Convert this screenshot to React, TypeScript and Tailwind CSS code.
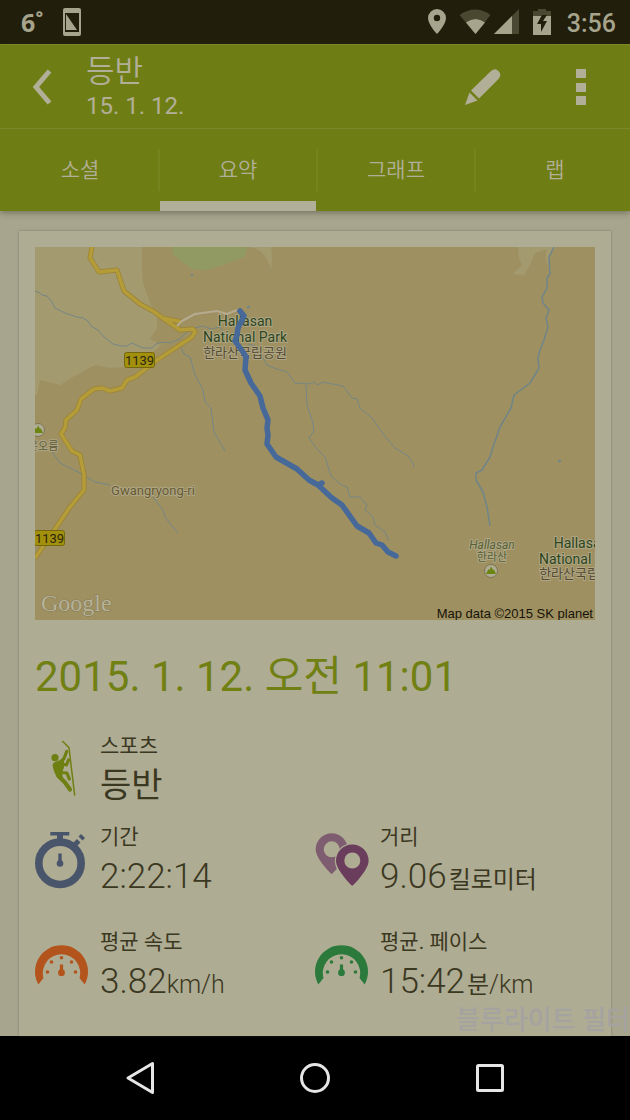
import type { ReactNode } from "react";

const sans = "font-['Roboto','Noto_Sans_CJK_KR',sans-serif]";

function StatusBar() {
  return (
    <div className="flex h-11 shrink-0 items-center justify-between bg-[#211e0b] pr-3.5 pl-5 text-[#a7a48d]">
      <div className="flex items-center gap-5">
        <span className="pl-px font-['Noto_Sans',sans-serif] text-[25px] leading-none font-bold">6˚</span>
        <svg width="18" height="28" viewBox="0 0 18 28" aria-hidden="true">
          <rect width="18" height="28" rx="2" fill="currentColor" />
          <path d="M2 5h14v19H2z" fill="#211e0b" />
          <path d="M3 6L14 22H3z" fill="currentColor" />
        </svg>
      </div>
      <div className="flex items-center">
        <svg width="91" height="26" viewBox="0 0 91 26" aria-hidden="true">
          <path
            d="M9 0a9 9 0 0 0-9 9c0 6.500 9 16 9 16s9-9.500 9-16a9 9 0 0 0-9-9zm0 12.200a3.200 3.200 0 1 1 0-6.400 3.200 3.200 0 0 1 0 6.400z"
            fill="currentColor"
          />
          <path d="M31.500 6q16-11 31 0L47.500 25z" fill="#4b4831" />
          <path d="M38 13.500q9.500-7 19 0L47.500 25z" fill="currentColor" />
          <path d="M66 25L91 0v25z" fill="#4b4831" />
          <path d="M66 25L84 7v18z" fill="currentColor" />
        </svg>
        <svg className="ml-3.5" width="18" height="26" viewBox="0 0 18 26" aria-hidden="true">
          <path d="M5 0h8v2h5v5H0V2h5z" fill="#4b4831" />
          <path d="M0 7h18v19H0z" fill="currentColor" />
          <path d="M9 6L4 15h4v8l6-11h-4l4-6z" fill="#211e0b" />
        </svg>
        <span className="ml-4 pt-0.5 text-[25px] leading-none font-medium">3:56</span>
      </div>
    </div>
  );
}

function TitleBar() {
  return (
    <header className="flex h-[85px] items-center border-t border-b border-t-[#7a8825] border-b-[#7a882a] pr-6 pl-8">
      <button type="button" aria-label="뒤로" className="w-[54px]">
        <svg width="20" height="36" viewBox="0 0 20 36" fill="none" aria-hidden="true">
          <path d="M17.500 2L4 18l13.500 16" stroke="#b2af98" strokeWidth="5" />
        </svg>
      </button>
      <div className="flex-1">
        <h1 className="pt-0.5 text-[31px] leading-9 font-[350]">등반</h1>
        <p className="text-2xl leading-8">15. 1. 12.</p>
      </div>
      <button type="button" aria-label="편집">
        <svg width="36" height="36" viewBox="0 0 36 36" fill="#b2af98" aria-hidden="true">
          <path d="M6 21.500L26 2q4-3.500 7.500 0t0 8L14 29.500z" />
          <path d="M4.500 23.500L12.500 31.500 0 36z" />
        </svg>
      </button>
      <button type="button" aria-label="더보기" className="ml-[67px] w-[38px]">
        <svg className="ml-2" width="10" height="36" viewBox="0 0 10 36" fill="#b2af98" aria-hidden="true">
          <path d="M0 0h10v9H0zM0 14h10v9H0zM0 27h10v9H0z" />
        </svg>
      </button>
    </header>
  );
}

function Tabs() {
  const tabs = ["소셜", "요약", "그래프", "랩"];
  return (
    <nav className="overflow-hidden">
      <div className="-mr-1 grid h-[82px] grid-cols-4 pl-0.5" role="tablist">
        {tabs.map((tab, i) => (
          <button
            key={tab}
            type="button"
            role="tab"
            aria-selected={i === 1}
            className="flex flex-col text-[21px] font-[350]"
          >
            <span
              className={
                i < 3
                  ? "mt-5 flex h-[42px] w-full items-center justify-center border-r-2 border-[#76841f] pt-0.5"
                  : "mt-5 flex h-[42px] w-full items-center justify-center pt-0.5"
              }
            >
              {tab}
            </span>
            {i === 1 && <span className="mt-auto h-2.5 w-full border-r-2 border-[#6f7e14] bg-[#b2af98]" />}
          </button>
        ))}
      </div>
    </nav>
  );
}

function Peak({ x, y }: { x: number; y: number }) {
  return (
    <g transform={`translate(${x} ${y})`}>
      <circle r="6.500" fill="#aeac92" stroke="#7d7553" />
      <path d="M-5 3l2.500-5 1 1L0-4.500 2-1l1-.5L5 3z" fill="#6c8410" />
    </g>
  );
}

function RoadSign({ x, y }: { x: number; y: number }) {
  return (
    <g transform={`translate(${x} ${y})`}>
      <rect x="0.500" y="0.500" width="30" height="15" rx="2" fill="#a28f0c" stroke="#75670d" />
      <text x="15.500" y="13" textAnchor="middle" fontSize="13" fill="#2b2610">
        1139
      </text>
    </g>
  );
}

function RouteMap() {
  const halo = "[paint-order:stroke] [stroke:#aea686] [stroke-width:2px] [stroke-linejoin:round]";
  return (
    <svg
      className={`block h-auto w-full ${sans}`}
      viewBox="0 0 560 373"
      role="img"
      aria-label="Hallasan National Park"
    >
      <rect width="560" height="373" fill="#9f9061" />
      <path
        d="M0 0H107V20L108 36 116 58 122 68V81L115 92 126 98 110 113 92 120 75 121 60 118 38 130 25 138 5 133 2 148H0z"
        fill="#a39a70"
      />
      <path d="M137 0l1 8 19 14 15 1 13-4 13-5 12-4 2-10z" fill="#919a63" />
      <path d="M214 0q17 2 22 23 2-10 0-23z" fill="#a39a70" />
      <path d="M483 0l1 11 3 7-9 9 11 1 6-10 5-12 12-4q-3 8 1 18 0-14 9-20z" fill="#a39a70" />

      <g fill="none" stroke="#748784" strokeWidth="1" strokeLinejoin="round">
        <path d="M0 44l5 2 2 2 5 1 5 6 3 6 10 5 12 4 6 1 5 3 3 5 7 4 6 7 9 7 8 2 6 0 5-3 11 5 9 0 4-4 6-2 8 1 10-4 7-7 8-4 8-2 8 3 9-2 3 5M213 97l7 2 5 7 7 12 10 4 10 3 8 11 15 1 3-2 5 3 4-3 21 4 9 12 5 1 3 9 12 10 12 17 11 13 13 8 5 7 1 4" />
        <path d="M145 98l4 9 6 3 5 18 8 15 2 12 6 6 3 24 11 19" />
        <path d="M271 138l1 20 6 18 1 8-5 7 8 11 8 8 6 19 9 8 7 3 3 10 10 0 7 8-2 5 8 7 2 8 10 7 4 9" />
        <path d="M17 205l8 11 20 10 15 9 15 3M118 250l10 13 2 7 7 9 6 7" />
        <path
          d="M519 0l-5 10 1 17-3 4 0 10-5 9 1 6 6 7-3 8 2 9-4 13-5 13-1 6 1 9-9 15-16 12-3 13-11 19-8 23-2 7-8 13-6 3 0 7 7 12 4 15 3 19"
          stroke="#6f8588"
          strokeWidth="1.500"
        />
        <path d="M156 28h2M212 60h3M523 214h3" strokeWidth="2.500" />
      </g>

      <path
        d="M57 0L55 11 64 25 82 23 89 44 105 57 118 64 129 72 145 83 158 82 160 85 157 90 122 113 100 130 92 133 87 141 75 144 67 141 59 142 46 152 42 163 31 173 30 181 26 187 37 204 45 208 49 228V243L35 260 18 285 0 311M127 71L147 75"
        fill="none"
        stroke="#9b8234"
        strokeWidth="5"
        strokeLinejoin="round"
      />
      <path
        d="M57 0L55 11 64 25 82 23 89 44 105 57 118 64 129 72 145 83 158 82 160 85 157 90 122 113 100 130 92 133 87 141 75 144 67 141 59 142 46 152 42 163 31 173 30 181 26 187 37 204 45 208 49 228V243L35 260 18 285 0 311M127 71L147 75"
        fill="none"
        stroke="#b49c38"
        strokeWidth="3.500"
        strokeLinejoin="round"
      />
      <path
        d="M142 79l5-5 13-7 22-3 10 3 10-4"
        fill="none"
        stroke="#b5ab90"
        strokeWidth="2"
        strokeLinejoin="round"
      />

      <RoadSign x={89} y={105} />
      <RoadSign x={-1} y={283} />
      <Peak x={3} y={183} />
      <Peak x={456} y={324} />

      <g className={halo} textAnchor="middle">
        <g fontSize="14" fill="#2c451b">
          <text x="210" y="79">Hallasan</text>
          <text x="210" y="95">National Park</text>
          <text x="546" y="301">Hallasan</text>
          <text x="546" y="317">National Park</text>
        </g>
        <g fontSize="13" fill="#554b31">
          <text x="210" y="110">한라산국립공원</text>
          <text x="546" y="331">한라산국립공원</text>
        </g>
        <text x="3" y="203" fontSize="11" fill="#5d5a36">
          검은오름
        </text>
        <text x="118" y="248" fontSize="13" fill="#665b32">
          Gwangryong-ri
        </text>
        <text x="457" y="302" fontSize="12" fontStyle="italic" fill="#566032">
          Hallasan
        </text>
        <text x="457" y="314" fontSize="11" fill="#566032">
          한라산
        </text>
      </g>

      <path
        d="M205 64L209 69 203 81 202 88 200 94 208 105 211 110 210 123 216 136 225 149 228 161 233 173 232 181 233 188 232 197 241 210 262 222 274 233 283 238 297 251 307 258 322 279 334 286 341 296 347 298 353 305 361 309M283 238L287 236"
        fill="none"
        stroke="#46699a"
        strokeWidth="5.500"
        strokeLinecap="round"
        strokeLinejoin="round"
      />
      <text
        x="6"
        y="364"
        fontSize="24"
        fill="#b5b298"
        className="font-['Liberation_Serif',serif] [paint-order:stroke] [stroke:#867b57] [stroke-width:1px]"
      >
        Google
      </text>
      <text
        x="558"
        y="371"
        textAnchor="end"
        fontSize="13"
        fill="#15130a"
        className="font-['Liberation_Sans',sans-serif]"
      >
        Map data ©2015 SK planet
      </text>
    </svg>
  );
}

function ClimberIcon() {
  return (
    <svg className="ml-[15px]" width="27" height="57" viewBox="0 0 27 57" fill="none" stroke="#6f8013" aria-hidden="true">
      <path d="M12.300 1L19 7.700l5.700 48" strokeWidth="1.500" />
      <circle cx="5" cy="17.700" r="3.600" fill="#6f8013" stroke="none" />
      <path d="M2.500 25Q3 22 9 20.500L14 20.500l0 7-2 5 1 6L9.500 39.500Q4 35 2.500 25z" fill="#6f8013" stroke="none" />
      <g strokeWidth="3.200" strokeLinecap="round" strokeLinejoin="round">
        <path d="M10 22.500l4-4 2.700-7M12 24l4.500 1 2-5M10 32.500l7 .5 2.300 6" />
        <path d="M8 35.500l7 7 5 7" strokeWidth="4.200" />
      </g>
    </svg>
  );
}

function StopwatchIcon() {
  return (
    <svg width="53" height="58" viewBox="0 0 53 58" fill="#49556a" aria-hidden="true">
      <circle cx="25" cy="32.300" r="21.200" fill="none" stroke="#49556a" strokeWidth="7.600" />
      <path d="M15.300 1h19v3.500H28V9h-6V4.500h-6.700z" />
      <path d="M38 12l4-4 3.500 3.500-4 4zM43.500 5.500L46 3l4 4L47.500 9.500z" />
      <circle cx="25" cy="32.500" r="3.300" />
      <path d="M23.300 22.500h3.400V32h-3.400z" />
    </svg>
  );
}

function PinsIcon() {
  return (
    <svg width="55" height="54" viewBox="0 0 55 54" aria-hidden="true">
      <path
        d="M16.700.3a16 16 0 0 0-16 16c0 10 16 25 16 25s16-15 16-25a16 16 0 0 0-16-16zm0 24a8 8 0 1 1 0-16 8 8 0 0 1 0 16z"
        fill="#7f5d70"
      />
      <circle cx="37.300" cy="27.800" r="17.500" fill="#afac94" />
      <path
        d="M37.300 11.500A16.200 16.200 0 0 0 21 27.700C21 37.500 37.300 53 37.300 53s16.300-15.500 16.300-25.300a16.200 16.200 0 0 0-16.300-16.200zm0 24a8 8 0 1 1 0-16 8 8 0 0 1 0 16z"
        fill="#6b3d5c"
      />
    </svg>
  );
}

function GaugeIcon({ color }: { color: string }) {
  return (
    <svg width="53" height="40" viewBox="0 0 53 40" fill={color} aria-hidden="true">
      <path d="M3.300 39.500A26.500 26.500 0 1 1 49.700 39.500L44.500 33A18.700 18.700 0 1 0 8.500 33z" />
      <circle cx="12.500" cy="27" r="1.800" />
      <circle cx="16.500" cy="17" r="1.800" />
      <circle cx="26.500" cy="12.700" r="1.800" />
      <circle cx="36.500" cy="17" r="1.800" />
      <circle cx="40.500" cy="27" r="1.800" />
      <circle cx="26.500" cy="27.700" r="3.400" />
      <path d="M24.900 19.500h3.200V28h-3.200z" />
    </svg>
  );
}

function Stat({ icon, label, children }: { icon: ReactNode; label: string; children: ReactNode }) {
  return (
    <div className="flex items-center">
      <div className="w-[65px] shrink-0">{icon}</div>
      <dl>
        <dt className="text-[21px] leading-8">{label}</dt>
        <dd className="h-[45px] text-[35px] leading-[48px] font-light whitespace-nowrap">{children}</dd>
      </dl>
    </div>
  );
}

function NavigationBar() {
  return (
    <nav className="grid h-[84px] shrink-0 grid-cols-3 bg-black px-[52px]">
      <button type="button" aria-label="뒤로" className="flex items-center justify-center">
        <svg width="30" height="34" viewBox="0 0 30 34" fill="none" stroke="#e6e6e6" strokeWidth="3" aria-hidden="true">
          <path d="M27.500 2.500v29L3 17z" strokeLinejoin="round" />
        </svg>
      </button>
      <button type="button" aria-label="홈" className="flex items-center justify-center">
        <svg width="32" height="32" viewBox="0 0 32 32" fill="none" stroke="#e6e6e6" strokeWidth="3" aria-hidden="true">
          <circle cx="16" cy="16" r="13.500" />
        </svg>
      </button>
      <button type="button" aria-label="최근 앱" className="flex items-center justify-center">
        <svg width="28" height="28" viewBox="0 0 28 28" fill="none" stroke="#e6e6e6" strokeWidth="3" aria-hidden="true">
          <rect x="1.500" y="1.500" width="25" height="25" rx="1" />
        </svg>
      </button>
    </nav>
  );
}

export default function App() {
  return (
    <div className={`flex min-h-screen flex-col bg-[#a7a58e] ${sans}`} lang="ko">
      <StatusBar />
      <div className="z-10 bg-[#6f7e14] text-[#b2af98] shadow-[0_2px_6px_rgba(60,58,40,0.45)]">
        <TitleBar />
        <Tabs />
      </div>
      <main className="relative flex flex-1 flex-col px-[19px] pt-5">
        <section className="flex-1 bg-[#afac94] px-4 pt-4 text-[#3b3821] shadow-[0_0_2px_rgba(70,68,50,0.5)]">
          <RouteMap />
          <h2 className="mt-7 text-[42px] leading-[58px] text-[#708013]">2015. 1. 12. 오전 11:01</h2>
          <div className="mt-6">
            <Stat icon={<ClimberIcon />} label="스포츠">
              <span className="text-[34px] leading-none font-normal">등반</span>
            </Stat>
          </div>
          <div className="mt-3.5 grid grid-cols-2 gap-y-7">
            <Stat icon={<StopwatchIcon />} label="기간">
              2:22:14
            </Stat>
            <Stat icon={<PinsIcon />} label="거리">
              9.06<span className="ml-0.5 text-2xl leading-none font-normal">킬로미터</span>
            </Stat>
            <Stat icon={<GaugeIcon color="#b2541b" />} label="평균 속도">
              3.82<span className="text-[25px] leading-none">km/h</span>
            </Stat>
            <Stat icon={<GaugeIcon color="#2b7a3b" />} label="평균. 페이스">
              15:42<span className="ml-0.5 text-2xl leading-none font-normal">분</span>
              <span className="text-[25px] leading-none">/km</span>
            </Stat>
          </div>
        </section>
        <p className="absolute right-0 bottom-0 text-[26px] leading-8 font-medium text-[#a4a3a0]">블루라이트 필터</p>
      </main>
      <NavigationBar />
    </div>
  );
}
